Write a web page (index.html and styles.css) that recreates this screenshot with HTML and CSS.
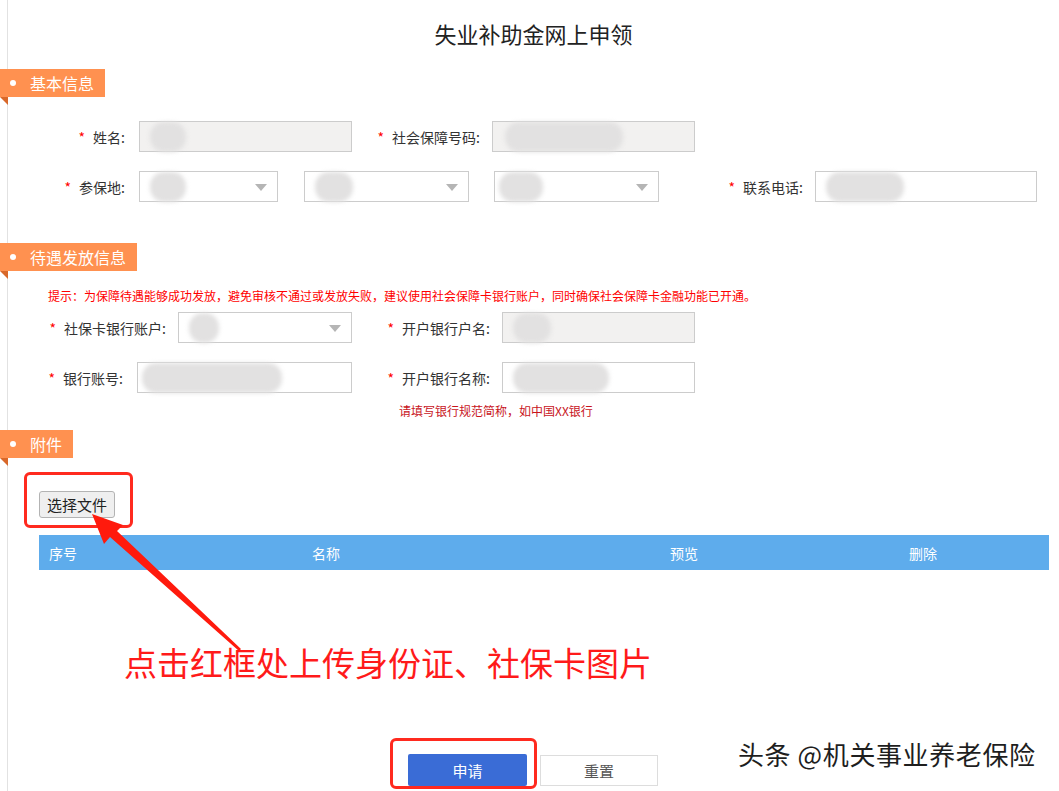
FILE: index.html
```html
<!DOCTYPE html>
<html>
<head>
    <meta charset="UTF-8">
    <title>失业补助金网上申领</title>
    <link rel="stylesheet" href="styles.css">
</head>
<body>
<div class="page">
    <h1 class="title">失业补助金网上申领</h1>

    <!-- 基本信息 -->
    <div class="sec-head sec-basic">基本信息</div>
    <div class="row row-name">
        <div class="lbl lbl-125"><i>*</i>姓名:</div>
        <div class="inp readonly ml-14 w-213"><span class="smudge" style="width:36px"></span></div>
        <div class="lbl lbl-128"><i>*</i>社会保障号码:</div>
        <div class="inp readonly ml-12 w-203"><span class="smudge" style="width:118px;margin-left:2px"></span></div>
    </div>
    <div class="row row-area">
        <div class="lbl lbl-125"><i>*</i>参保地:</div>
        <div class="inp sel ml-14 w-139"><span class="smudge" style="width:36px"></span><b class="caret"></b></div>
        <div class="inp sel ml-26 w-165"><span class="smudge" style="width:38px"></span><b class="caret"></b></div>
        <div class="inp sel ml-25 w-165"><span class="smudge" style="width:44px;margin-left:-6px"></span><b class="caret"></b></div>
        <div class="lbl lbl-144"><i>*</i>联系电话:</div>
        <div class="inp ml-12 w-222"><span class="smudge" style="width:78px"></span></div>
    </div>

    <!-- 待遇发放信息 -->
    <div class="sec-head sec-pay">待遇发放信息</div>
    <p class="tip">提示：为保障待遇能够成功发放，避免审核不通过或发放失败，建议使用社会保障卡银行账户，同时确保社会保障卡金融功能已开通。</p>
    <div class="row row-card">
        <div class="lbl lbl-166"><i>*</i>社保卡银行账户:</div>
        <div class="inp sel ml-12 w-174"><span class="smudge" style="width:30px"></span><b class="caret"></b></div>
        <div class="lbl lbl-138"><i>*</i>开户银行户名:</div>
        <div class="inp readonly ml-12 w-193"><span class="smudge" style="width:38px"></span></div>
    </div>
    <div class="row row-bank">
        <div class="lbl lbl-123"><i>*</i>银行账号:</div>
        <div class="inp ml-14 w-215"><span class="smudge" style="width:140px;margin-left:-6px"></span></div>
        <div class="lbl lbl-138"><i>*</i>开户银行名称:</div>
        <div class="inp ml-12 w-193"><span class="smudge" style="width:96px"></span></div>
    </div>
    <p class="hint">请填写银行规范简称，如中国XX银行</p>

    <!-- 附件 -->
    <div class="sec-head sec-file">附件</div>
    <div class="mark mark-file">
        <button class="file-btn">选择文件</button>
    </div>
    <div class="file-table">
        <span>序号</span>
        <span>名称</span>
        <span>预览</span>
        <span>删除</span>
    </div>

    <p class="note">点击红框处上传身份证、社保卡图片</p>

    <div class="actions">
        <div class="mark mark-submit">
            <button class="btn-apply">申请</button>
        </div>
        <button class="btn-reset">重置</button>
    </div>

    <svg class="arrow" width="1059" height="791" viewBox="0 0 1059 791">
        <polygon points="92,514 123,525 117,531 241,649 239,651 110,537 104,544" fill="#ff1a0d"/>
    </svg>
    <div class="watermark">头条 @机关事业养老保险</div>
</div>
</body>
</html>
```

FILE: styles.css
```css
* { box-sizing: border-box; }
body { margin: 0; font-family: "Noto Sans CJK SC", "Liberation Sans", sans-serif; color: #333; background: #fff linear-gradient(to right, #fff 0, #fff 7px, #e2e2e2 7px, #e2e2e2 8px, #fff 8px) repeat-y; }
.page { position: relative; width: 1059px; height: 791px; overflow: hidden; }

.title { margin: 0; padding: 18px 0 0 8px; height: 48px; line-height: 30px; font-size: 22px; font-weight: normal; text-align: center; color: #222; }

.sec-head { position: relative; display: inline-block; height: 28px; line-height: 28px; padding: 0 11px 0 30px; background: #ff9150; color: #fff; font-size: 16px; }
.sec-head::before { content: ""; position: absolute; left: 10px; top: 11px; width: 6px; height: 6px; border-radius: 50%; background: #fff; }
.sec-head::after { content: ""; position: absolute; left: 0; top: 28px; border-top: 8px solid #d8682a; border-left: 8px solid transparent; }
.sec-basic { display: block; width: 105px; margin-top: 21px; }
.sec-pay { display: block; width: 137px; margin-top: 41px; }
.sec-file { display: block; width: 73px; margin-top: 10px; }

.row { display: flex; align-items: center; height: 31px; }
.row-name { margin-top: 24px; }
.row-area { margin-top: 19px; }
.row-card { margin-top: 6px; }
.row-bank { margin-top: 19px; }

.lbl { flex: none; text-align: right; font-size: 14px; white-space: nowrap; }
.lbl i { font-style: normal; color: #f00; margin-right: 8px; }
.lbl-123 { width: 123px; }
.lbl-125 { width: 125px; }
.lbl-128 { width: 128px; }
.lbl-138 { width: 138px; }
.lbl-144 { width: 144px; }
.lbl-166 { width: 166px; }

.inp { flex: none; position: relative; display: flex; align-items: center; height: 31px; padding-left: 10px; border: 1px solid #ccc; background: #fff; }
.inp.readonly { background: #f2f1f0; }
.smudge { display: block; height: 30px; border-radius: 14px; background: #e2e1e1; filter: blur(2px); }
.caret { position: absolute; right: 10px; top: 12px; border-top: 7px solid #b5b5b5; border-left: 6px solid transparent; border-right: 6px solid transparent; }

.ml-12 { margin-left: 12px; }
.ml-14 { margin-left: 14px; }
.ml-25 { margin-left: 25px; }
.ml-26 { margin-left: 26px; }
.w-139 { width: 139px; }
.w-165 { width: 165px; }
.w-174 { width: 174px; }
.w-193 { width: 193px; }
.w-203 { width: 203px; }
.w-213 { width: 213px; }
.w-215 { width: 215px; }
.w-222 { width: 222px; }

.tip { margin: 15px 0 0 48px; line-height: 20px; font-size: 12px; color: #f00; white-space: nowrap; }
.hint { margin: 9px 0 0 399px; line-height: 18px; font-size: 12px; color: #c8141c; }

.mark { border: 3px solid #ff2a1f; border-radius: 6px; }
.mark-file { width: 109px; height: 56px; margin: 14px 0 0 24px; padding: 16px 0 0 12px; }
.file-btn { display: block; width: 76px; height: 27px; padding: 0; border: 1px solid #b3b3b3; border-radius: 3px; background: #efefef; color: #222; font-family: inherit; font-size: 15px; }

.file-table { display: grid; grid-template-columns: 263px 358px 239px 1fr; width: 1010px; height: 35px; margin: 7px 0 0 39px; align-items: center; background: #5eacec; color: #fff; font-size: 14px; }
.file-table span { padding-left: 10px; }

.note { margin: 72px 0 0 124px; line-height: 40px; font-size: 33px; color: #ff1a1a; }

.actions { display: flex; align-items: flex-start; margin: 56px 0 0 390px; }
.mark-submit { width: 147px; height: 51px; padding: 13px 0 0 15px; }
.btn-apply { display: block; width: 119px; height: 32px; border: none; border-radius: 2px; background: #3a6cd6; color: #fff; font-family: inherit; font-size: 15px; }
.btn-reset { width: 118px; height: 31px; margin: 17px 0 0 3px; border: 1px solid #ddd; background: #fff; color: #555; font-family: inherit; font-size: 15px; }

.arrow { position: absolute; left: 0; top: 0; pointer-events: none; }
.watermark { position: absolute; left: 738px; top: 737px; font-size: 26px; line-height: 34px; letter-spacing: 0.6px; color: #1e1e1e; text-shadow: 1px 1px 0 #fff, -1px -1px 0 #fff; white-space: nowrap; }
```
